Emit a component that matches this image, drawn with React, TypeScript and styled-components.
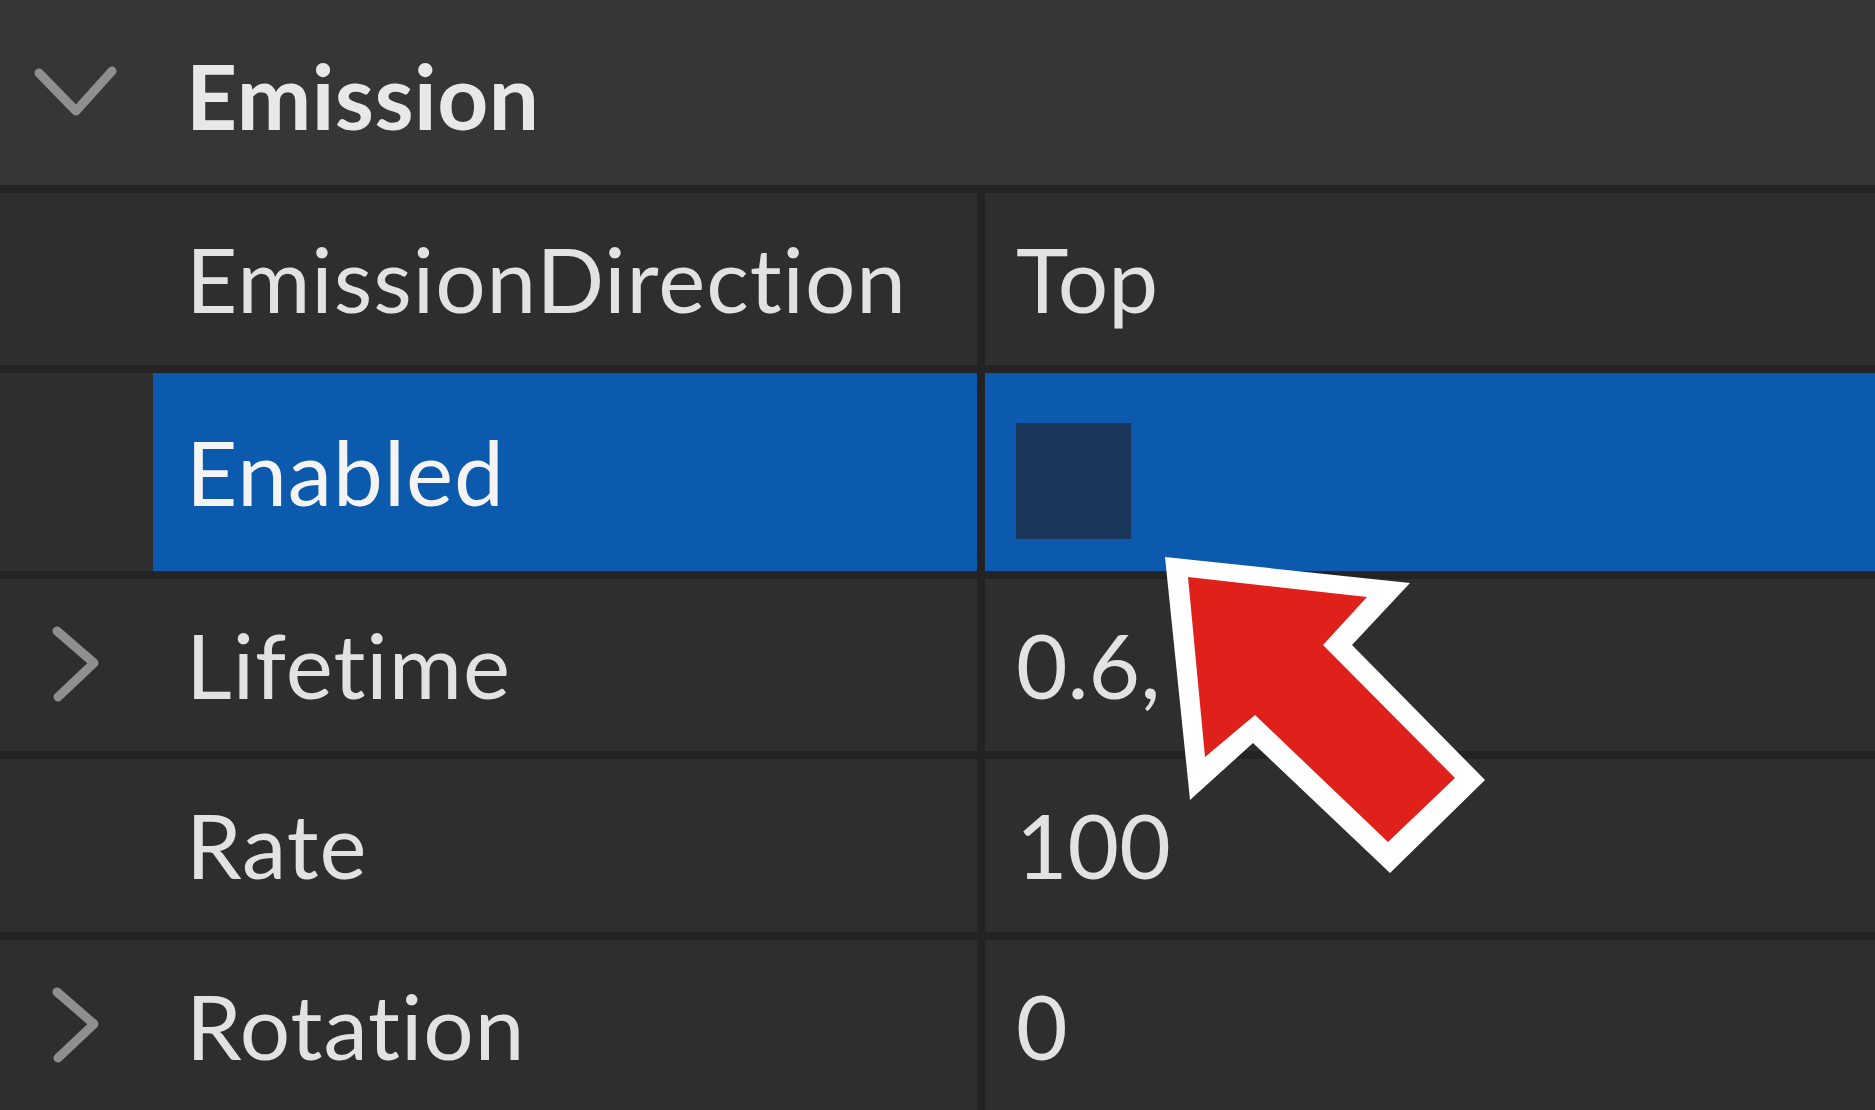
import React from "react";
import styled, { createGlobalStyle } from "styled-components";

const GlobalStyle = createGlobalStyle`
  html, body {
    margin: 0;
    padding: 0;
    background: #2e2e2e;
    overflow: hidden;
  }
  * { box-sizing: border-box; }
`;

const Page = styled.div`
  position: relative;
  width: 1875px;
  height: 1110px;
  overflow: hidden;
  background: #2e2e2e;
  font-family: Lato, "Open Sans", sans-serif;
  font-variant-ligatures: none;
`;

const Panel = styled.div`
  display: flex;
  flex-direction: column;
`;

const CategoryHeader = styled.div`
  display: grid;
  grid-template-columns: 153px 1fr;
  align-items: center;
  height: 193px;
  background: #363636;
  border-bottom: 8px solid #232323;
`;

const ExpanderCell = styled.div`
  display: flex;
  align-items: center;
  justify-content: flex-start;
  height: 100%;
`;

const CategoryTitle = styled.div`
  padding-left: 33px;
  padding-top: 8px;
  font-size: 89px;
  font-weight: 700;
  letter-spacing: 0.5px;
  color: #e8e8e8;
  line-height: 1.2;
`;

const PropRow = styled.div<{ $h: number }>`
  display: grid;
  grid-template-columns: 153px 824px 8px 1fr;
  height: ${(p) => p.$h + 8}px;
  border-bottom: 8px solid #232323;
  background: #2e2e2e;
`;

const NameCell = styled.div<{ $selected?: boolean }>`
  display: flex;
  align-items: center;
  padding-left: 33px;
  background: ${(p) => (p.$selected ? "#0b5aad" : "transparent")};
  font-size: 89px;
  letter-spacing: 1px;
  line-height: 1.2;
  color: ${(p) => (p.$selected ? "#f4f4f4" : "#e2e2e2")};
  white-space: nowrap;
`;

const ColumnDivider = styled.div`
  background: #232323;
`;

const ValueCell = styled.div<{ $selected?: boolean }>`
  display: flex;
  align-items: center;
  padding-left: 31px;
  background: ${(p) => (p.$selected ? "#0b5aad" : "transparent")};
  font-size: 89px;
  line-height: 1.2;
  color: #e2e2e2;
  white-space: nowrap;
`;

const Checkbox = styled.div`
  width: 115px;
  height: 116px;
  background: #1a365a;
  margin-top: 18px;
`;

const ArrowOverlay = styled.svg`
  position: absolute;
  left: 0;
  top: 0;
  width: 1875px;
  height: 1110px;
  pointer-events: none;
`;

const ChevronDown = () => (
  <svg width="153" height="185" viewBox="0 0 153 185">
    <polyline
      points="39,73 76,111 112,71"
      fill="none"
      stroke="#8f8f8f"
      strokeWidth="9"
      strokeLinecap="round"
      strokeLinejoin="round"
    />
  </svg>
);

const ChevronRight = () => (
  <svg width="153" height="172" viewBox="0 0 153 172">
    <polyline
      points="57,52 94,84 58,118"
      fill="none"
      stroke="#8f8f8f"
      strokeWidth="9"
      strokeLinecap="round"
      strokeLinejoin="round"
    />
  </svg>
);

type Prop = {
  name: string;
  value?: string;
  h: number;
  expandable?: boolean;
  selected?: boolean;
  checkbox?: boolean;
};

const props: Prop[] = [
  { name: "EmissionDirection", value: "Top", h: 172 },
  { name: "Enabled", h: 198, selected: true, checkbox: true },
  { name: "Lifetime", value: "0.6,", h: 172, expandable: true },
  { name: "Rate", value: "100", h: 173 },
  { name: "Rotation", value: "0", h: 172, expandable: true },
];

export default function App() {
  return (
    <Page>
      <GlobalStyle />
      <Panel>
        <CategoryHeader>
          <ExpanderCell>
            <ChevronDown />
          </ExpanderCell>
          <CategoryTitle>Emission</CategoryTitle>
        </CategoryHeader>
        {props.map((p) => (
          <PropRow key={p.name} $h={p.h}>
            <ExpanderCell>{p.expandable && <ChevronRight />}</ExpanderCell>
            <NameCell $selected={p.selected}>{p.name}</NameCell>
            <ColumnDivider />
            <ValueCell $selected={p.selected}>
              {p.checkbox ? <Checkbox /> : p.value}
            </ValueCell>
          </PropRow>
        ))}
      </Panel>
      <ArrowOverlay viewBox="0 0 1875 1110">
        <polygon
          points="1165,557 1410,583 1352,645 1485,780 1390,873 1253,743 1190,800"
          fill="#ffffff"
        />
        <polygon
          points="1188,577 1367,597 1323,645 1455,778 1388,842 1255,715 1205,757"
          fill="#e0201a"
        />
      </ArrowOverlay>
    </Page>
  );
}
